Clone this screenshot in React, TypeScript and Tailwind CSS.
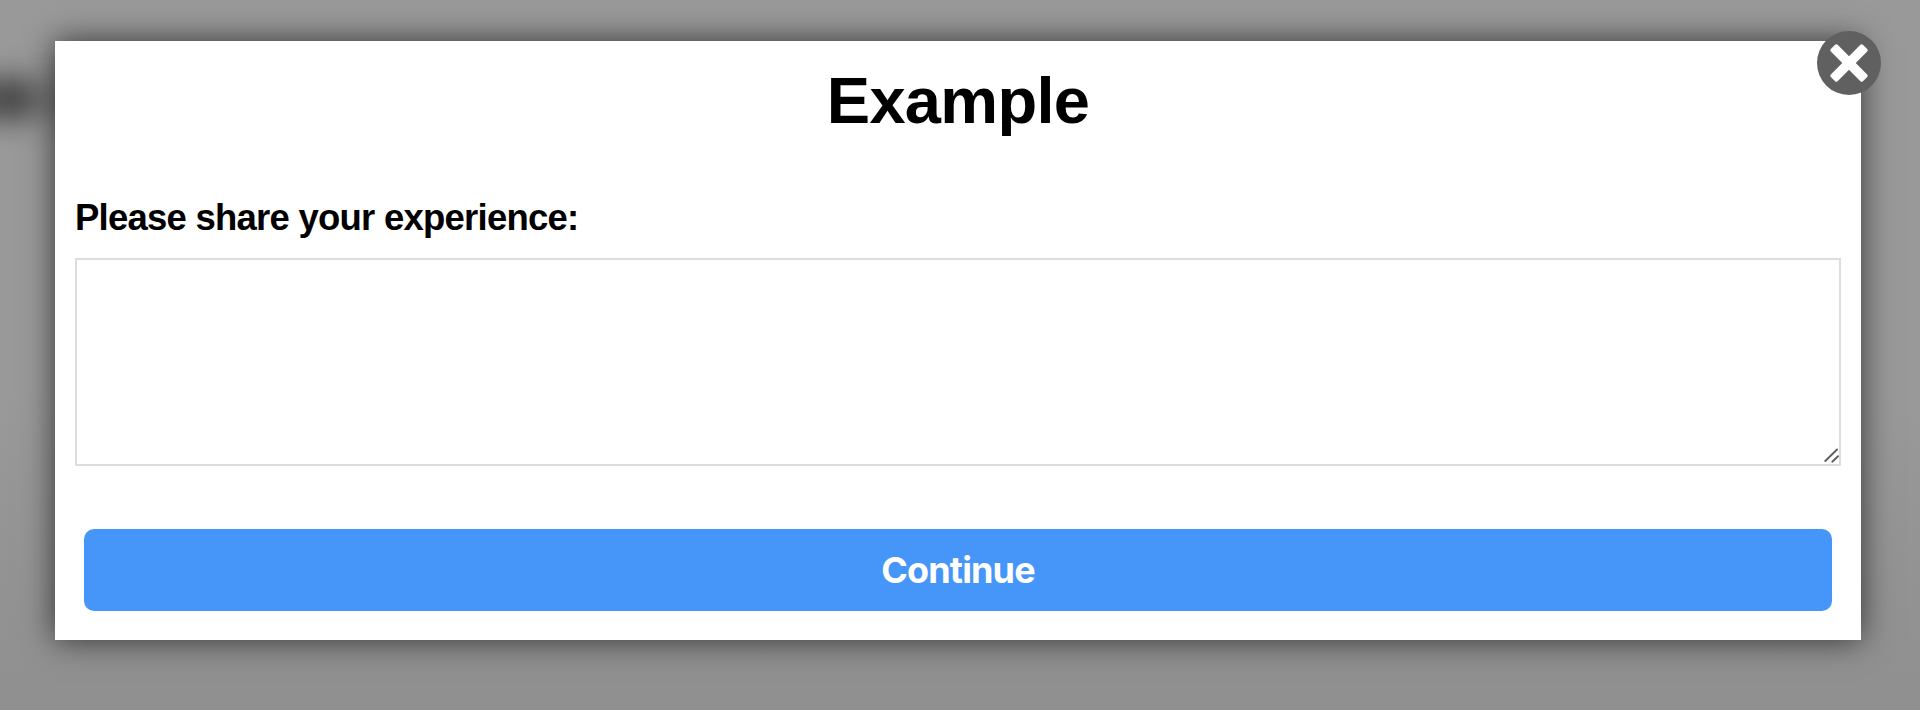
function CloseIcon() {
  return (
    <svg viewBox="0 0 64 64" className="size-16" aria-hidden="true">
      <circle cx="32" cy="32" r="32" fill="#606060" />
      <g fill="#fff" transform="rotate(45 32 32)">
        <rect x="9.3" y="27.2" width="45.4" height="9.6" rx="1.8" />
        <rect x="27.2" y="9.3" width="9.6" height="45.4" rx="1.8" />
      </g>
    </svg>
  );
}

function ResizeGrip() {
  return (
    <svg viewBox="0 0 16 16" className="size-4" aria-hidden="true">
      <path d="M1.3 13 13 1.5M8.3 13.7 14 8.2" stroke="#606060" strokeWidth="1.9" strokeLinecap="round" fill="none" />
    </svg>
  );
}

export default function App() {
  return (
    <div className="relative flex h-[710px] w-full items-start justify-center overflow-hidden bg-[linear-gradient(to_bottom,#999_0%,#999_55%,#909090_95%,#909090_100%)] pt-[41px] pr-1 font-['Liberation_Sans',Arial,sans-serif]">
      <div className="absolute top-[80px] -left-[60px] h-[38px] w-[92px] bg-black/50 blur-[15px]" />
      <div className="absolute top-[82px] left-0 h-[34px] w-[75px] bg-black/20 blur-[14px]" />
      <main className="relative flex h-[599px] w-[1806px] flex-col bg-white px-5 pt-[23px] shadow-[0_0_30px_rgba(0,0,0,0.66)]">
        <h1 className="text-center text-[65px] leading-[74px] font-bold tracking-[-0.7px] text-black">Example</h1>
        <div className="flex flex-col gap-5 pt-[60px] pb-[63px]">
          <label htmlFor="experience" className="text-[36.5px] leading-10 font-bold tracking-[-0.76px] text-black">
            Please share your experience:
          </label>
          <div className="relative flex h-[208px]">
            <textarea
              id="experience"
              className="flex-1 resize-none rounded-none border-2 border-[#ddd] bg-white p-2 text-[32px] outline-none"
            />
            <span className="pointer-events-none absolute right-px bottom-0.5">
              <ResizeGrip />
            </span>
          </div>
        </div>
        <div className="flex px-[9px]">
          <button className="flex h-[82px] flex-1 items-center justify-center rounded-[10px] bg-[#4696fa] font-[Inter,sans-serif] text-[36px] leading-[44px] font-bold tracking-[-0.85px] text-white">
            Continue
          </button>
        </div>
        <button aria-label="Close" className="absolute -top-[10px] -right-5 size-16">
          <CloseIcon />
        </button>
      </main>
    </div>
  );
}
